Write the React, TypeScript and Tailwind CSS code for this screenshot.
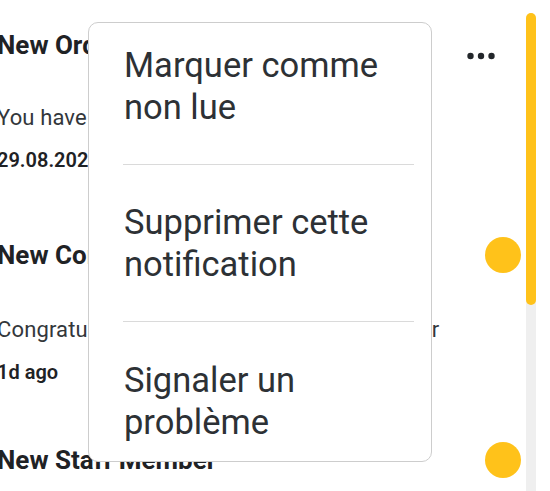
type Notice = {
  title: string;
  body: string;
  when: string;
  unread: boolean;
  gap: string;
};

const notices: Notice[] = [
  { title: "New Order", body: "You have a new order from John", when: "29.08.2024", unread: false, gap: "pb-[63px]" },
  { title: "New Comment", body: "Congratulations! You have a new commenter", when: "1d ago", unread: true, gap: "pb-[56px]" },
  { title: "New Staff Member", body: "A new member joined your team", when: "2d ago", unread: true, gap: "pb-[56px]" },
];

const menuItems = [
  { label: "Marquer comme non lue", pad: "pt-[21px] pb-[36px]" },
  { label: "Supprimer cette notification", pad: "pt-[36px] pb-[36px]" },
  { label: "Signaler un problème", pad: "pt-[37px] pb-[17px]" },
];

function NoticeRow({ n, first }: { n: Notice; first: boolean }) {
  return (
    <div className={n.gap}>
      <div className="flex items-center justify-between">
        <h3 className="text-[26px] leading-[32px] font-bold text-[#1f2225] whitespace-nowrap">{n.title}</h3>
        {first ? (
          <button type="button" className="mr-[26px] mt-[22px] text-[#23272b]">
            <svg width="28" height="8" viewBox="0 0 28 8" fill="currentColor">
              <circle cx="3.5" cy="4" r="3.2" />
              <circle cx="14" cy="4" r="3.2" />
              <circle cx="24.5" cy="4" r="3.2" />
            </svg>
          </button>
        ) : (
          <span className="w-[36px] h-[36px] rounded-full bg-[#ffc21a] shrink-0" />
        )}
      </div>
      <p className="mt-[43px] text-[22px] leading-[28px] tracking-[0.13px] text-[#33373b] whitespace-nowrap">{n.body}</p>
      <p className="mt-[14px] text-[20px] leading-[28px] font-semibold text-[#1f2225] whitespace-nowrap">{n.when}</p>
    </div>
  );
}

export default function App() {
  return (
    <div
      className="relative w-[550px] h-[491px] overflow-hidden bg-white flex"
      style={{ fontFamily: "Roboto, 'Liberation Sans', sans-serif" }}
    >
      <div className="w-[529px] shrink-0 pt-[29px] pr-[5px] -ml-[3px]">
        {notices.map((n, i) => (
          <NoticeRow key={n.title} n={n} first={i === 0} />
        ))}
      </div>

      <div className="w-[10px] shrink-0 pt-[13px] flex flex-col">
        <div className="flex-1 bg-[#efefef] rounded-t-full flex flex-col">
          <div className="h-[292px] bg-[#ffc21a] rounded-full" />
        </div>
      </div>

      <div className="absolute left-[88px] top-[22px] w-[344px] h-[440px] bg-white border border-[#cdcdcd] rounded-[10px]">
        {menuItems.map((m, i) => (
          <div key={m.label}>
            {i > 0 && <div className="ml-[34px] mr-[17px] h-px bg-[#dadada]" />}
            <button
              type="button"
              className={`block w-full text-left pl-[35px] pr-[20px] ${m.pad} text-[34.5px] leading-[42px] text-[#2d3135]`}
            >
              {m.label}
            </button>
          </div>
        ))}
      </div>
    </div>
  );
}
